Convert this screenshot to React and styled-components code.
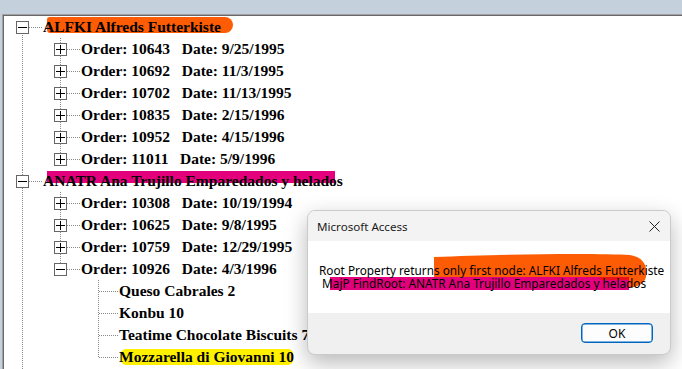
import React from 'react'
import styled, { createGlobalStyle } from 'styled-components'

const GlobalStyle = createGlobalStyle`
  html, body {
    margin: 0;
    padding: 0;
    overflow: hidden;
    background: #c4d0dc;
  }
`

const Screen = styled.div`
  position: relative;
  width: 682px;
  height: 369px;
  overflow: hidden;
  background: #c4d0dc;
  padding: 14px 0 0 2px;
  box-sizing: border-box;
`

const Panel = styled.div`
  height: 100%;
  background: #fff;
  border-top: 1px solid #a0a0a0;
  border-left: 1px solid #a0a0a0;
  box-shadow: inset 1px 1px 0 #696969;
  padding: 1px 0 0 1px;
  box-sizing: border-box;
  overflow: hidden;
`

const Branch = styled.ul`
  list-style: none;
  margin: 0;
  padding: 0 0 0 ${p => p.$indent || 0}px;
`

const Node = styled.li`
  position: relative;
  &::before {
    content: '';
    position: absolute;
    left: 18px;
    width: 1px;
    top: ${p => (p.$start ? 11 : 0)}px;
    ${p => (p.$last ? 'height: 12px;' : 'bottom: 0;')}
    background-image: linear-gradient(to bottom, #8a8a8a 50%, transparent 50%);
    background-size: 1px 2px;
  }
`

const Row = styled.div`
  position: relative;
  height: 22px;
  display: flex;
  align-items: center;
  padding-left: 39px;
  &::before {
    content: '';
    position: absolute;
    left: 19px;
    top: 11px;
    width: 20px;
    height: 1px;
    background-image: linear-gradient(to right, #8a8a8a 50%, transparent 50%);
    background-size: 2px 1px;
  }
`

const Toggle = styled.span`
  position: absolute;
  left: 12px;
  top: 5px;
  width: 13px;
  height: 13px;
  box-sizing: border-box;
  border: 1px solid #666;
  background: #fff;
  z-index: 1;
  &::before {
    content: '';
    position: absolute;
    left: 1px;
    right: 1px;
    top: 5px;
    height: 1px;
    background: #000;
  }
  &::after {
    content: '';
    display: ${p => (p.$open ? 'none' : 'block')};
    position: absolute;
    top: 1px;
    bottom: 1px;
    left: 5px;
    width: 1px;
    background: #000;
  }
`

const Label = styled.span`
  position: relative;
  isolation: isolate;
  font: bold 15.5px 'Liberation Serif', 'Times New Roman', serif;
  line-height: 22px;
  color: #000;
  white-space: pre;
`

const Mark = styled.span`
  position: absolute;
  z-index: -1;
  left: ${p => p.$left}px;
  top: ${p => p.$top}px;
  width: ${p => p.$width}px;
  height: ${p => p.$height}px;
  background: ${p => p.$color};
  border-radius: ${p => p.$radius || '2px'};
`

const Dialog = styled.div`
  position: absolute;
  left: 307px;
  top: 210px;
  width: 364px;
  height: 145px;
  box-sizing: border-box;
  border: 1px solid #cacaca;
  border-radius: 8px;
  background: #f0f0f0;
  overflow: hidden;
  box-shadow: 0 8px 22px rgba(0, 0, 0, 0.28);
  display: flex;
  flex-direction: column;
  font-family: 'Noto Sans', 'Open Sans', sans-serif;
  font-size: 11.8px;
  color: #000;
`

const TitleBar = styled.div`
  height: 30px;
  display: flex;
  align-items: center;
  justify-content: space-between;
  padding: 0 10px 0 9px;
  background: #f3f3f3;
`

const Title = styled.span`
  font-size: 11.6px;
  color: #1b1b1b;
`

const Body = styled.div`
  position: relative;
  height: 72px;
  background: #fff;
  padding: 23px 0 0 11px;
  box-sizing: border-box;
`

const Highlights = styled.svg`
  position: absolute;
  left: 0;
  top: 0;
`

const Message = styled.div`
  position: relative;
  line-height: 13px;
  white-space: pre;
`

const Footer = styled.div`
  flex: 1;
  display: flex;
  justify-content: flex-end;
  align-items: flex-start;
  padding: 10px 17px 0 0;
`

const Button = styled.button`
  width: 72px;
  height: 20px;
  box-sizing: border-box;
  border: 1px solid #0067c0;
  box-shadow: inset 0 0 0 0.5px #0067c0;
  border-radius: 4px;
  background: #fdfdfd;
  font-family: inherit;
  font-size: 12px;
  color: #000;
  padding: 0;
`

const customers = [
  {
    name: 'ALFKI Alfreds Futterkiste',
    mark: { left: 4, top: 1, width: 186, height: 16, color: '#fe5c04', radius: '3px 9px 9px 4px' },
    orders: [
      ['10643', '9/25/1995'],
      ['10692', '11/3/1995'],
      ['10702', '11/13/1995'],
      ['10835', '2/15/1996'],
      ['10952', '4/15/1996'],
      ['11011', '5/9/1996'],
    ],
  },
  {
    name: 'ANATR Ana Trujillo Emparedados y helados',
    mark: { left: 4, top: 1, width: 288, height: 12, color: '#e4007d', radius: '0' },
    orders: [
      ['10308', '10/19/1994'],
      ['10625', '9/8/1995'],
      ['10759', '12/29/1995'],
      ['10926', '4/3/1996', [
        { text: 'Queso Cabrales 2' },
        { text: 'Konbu 10' },
        { text: 'Teatime Chocolate Biscuits 7' },
        { text: 'Mozzarella di Giovanni 10', mark: { left: 2, top: 3, width: 172, height: 16, color: '#fff000', radius: '5px' } },
      ]],
    ],
  },
  {
    name: 'ANTON Antonio Moreno Taquería',
    orders: [],
  },
]

const Text = ({ text, mark }) => (
  <Label>
    {mark && <Mark $left={mark.left} $top={mark.top} $width={mark.width} $height={mark.height} $color={mark.color} $radius={mark.radius} />}
    {text}
  </Label>
)

const CloseIcon = () => (
  <svg width="11" height="11" viewBox="0 0 11 11">
    <path d="M0.5 0.5 L10.5 10.5 M10.5 0.5 L0.5 10.5" stroke="#202020" strokeWidth="1" fill="none" />
  </svg>
)

export default function App() {
  return (
    <>
      <GlobalStyle />
      <Screen>
        <Panel>
          <Branch>
            {customers.map((c, ci) => (
              <Node key={c.name} $start={ci === 0} $last={ci === customers.length - 1}>
                <Row>
                  <Toggle $open={c.orders.length > 0} />
                  <Text text={c.name} mark={c.mark} />
                </Row>
                {c.orders.length > 0 && (
                  <Branch $indent={38}>
                    {c.orders.map(([id, date, items], oi) => (
                      <Node key={id} $last={oi === c.orders.length - 1}>
                        <Row>
                          <Toggle $open={!!items} />
                          <Text text={`Order: ${id}   Date: ${date}`} />
                        </Row>
                        {items && (
                          <Branch $indent={38}>
                            {items.map((it, ii) => (
                              <Node key={it.text} $last={ii === items.length - 1}>
                                <Row>
                                  <Text text={it.text} mark={it.mark} />
                                </Row>
                              </Node>
                            ))}
                          </Branch>
                        )}
                      </Node>
                    ))}
                  </Branch>
                )}
              </Node>
            ))}
          </Branch>
        </Panel>

        <Dialog>
          <TitleBar>
            <Title>Microsoft Access</Title>
            <CloseIcon />
          </TitleBar>
          <Body>
            <Highlights width="362" height="72" viewBox="0 0 362 72">
              <path
                d="M126 16 C190 13 290 12 322 14 C336 16 340 26 338 36 C336 45 325 48 310 47 L292 47 L292 36 L126 36 Z"
                fill="#fe5c04"
              />
              <rect x="22" y="36" width="299" height="13" fill="#e4007d" />
              <rect x="292" y="36" width="29" height="3" fill="#e8101e" />
            </Highlights>
            <Message>{'Root Property returns only first node: ALFKI Alfreds Futterkiste\n MajP FindRoot: ANATR Ana Trujillo Emparedados y helados '}</Message>
          </Body>
          <Footer>
            <Button>OK</Button>
          </Footer>
        </Dialog>
      </Screen>
    </>
  )
}
